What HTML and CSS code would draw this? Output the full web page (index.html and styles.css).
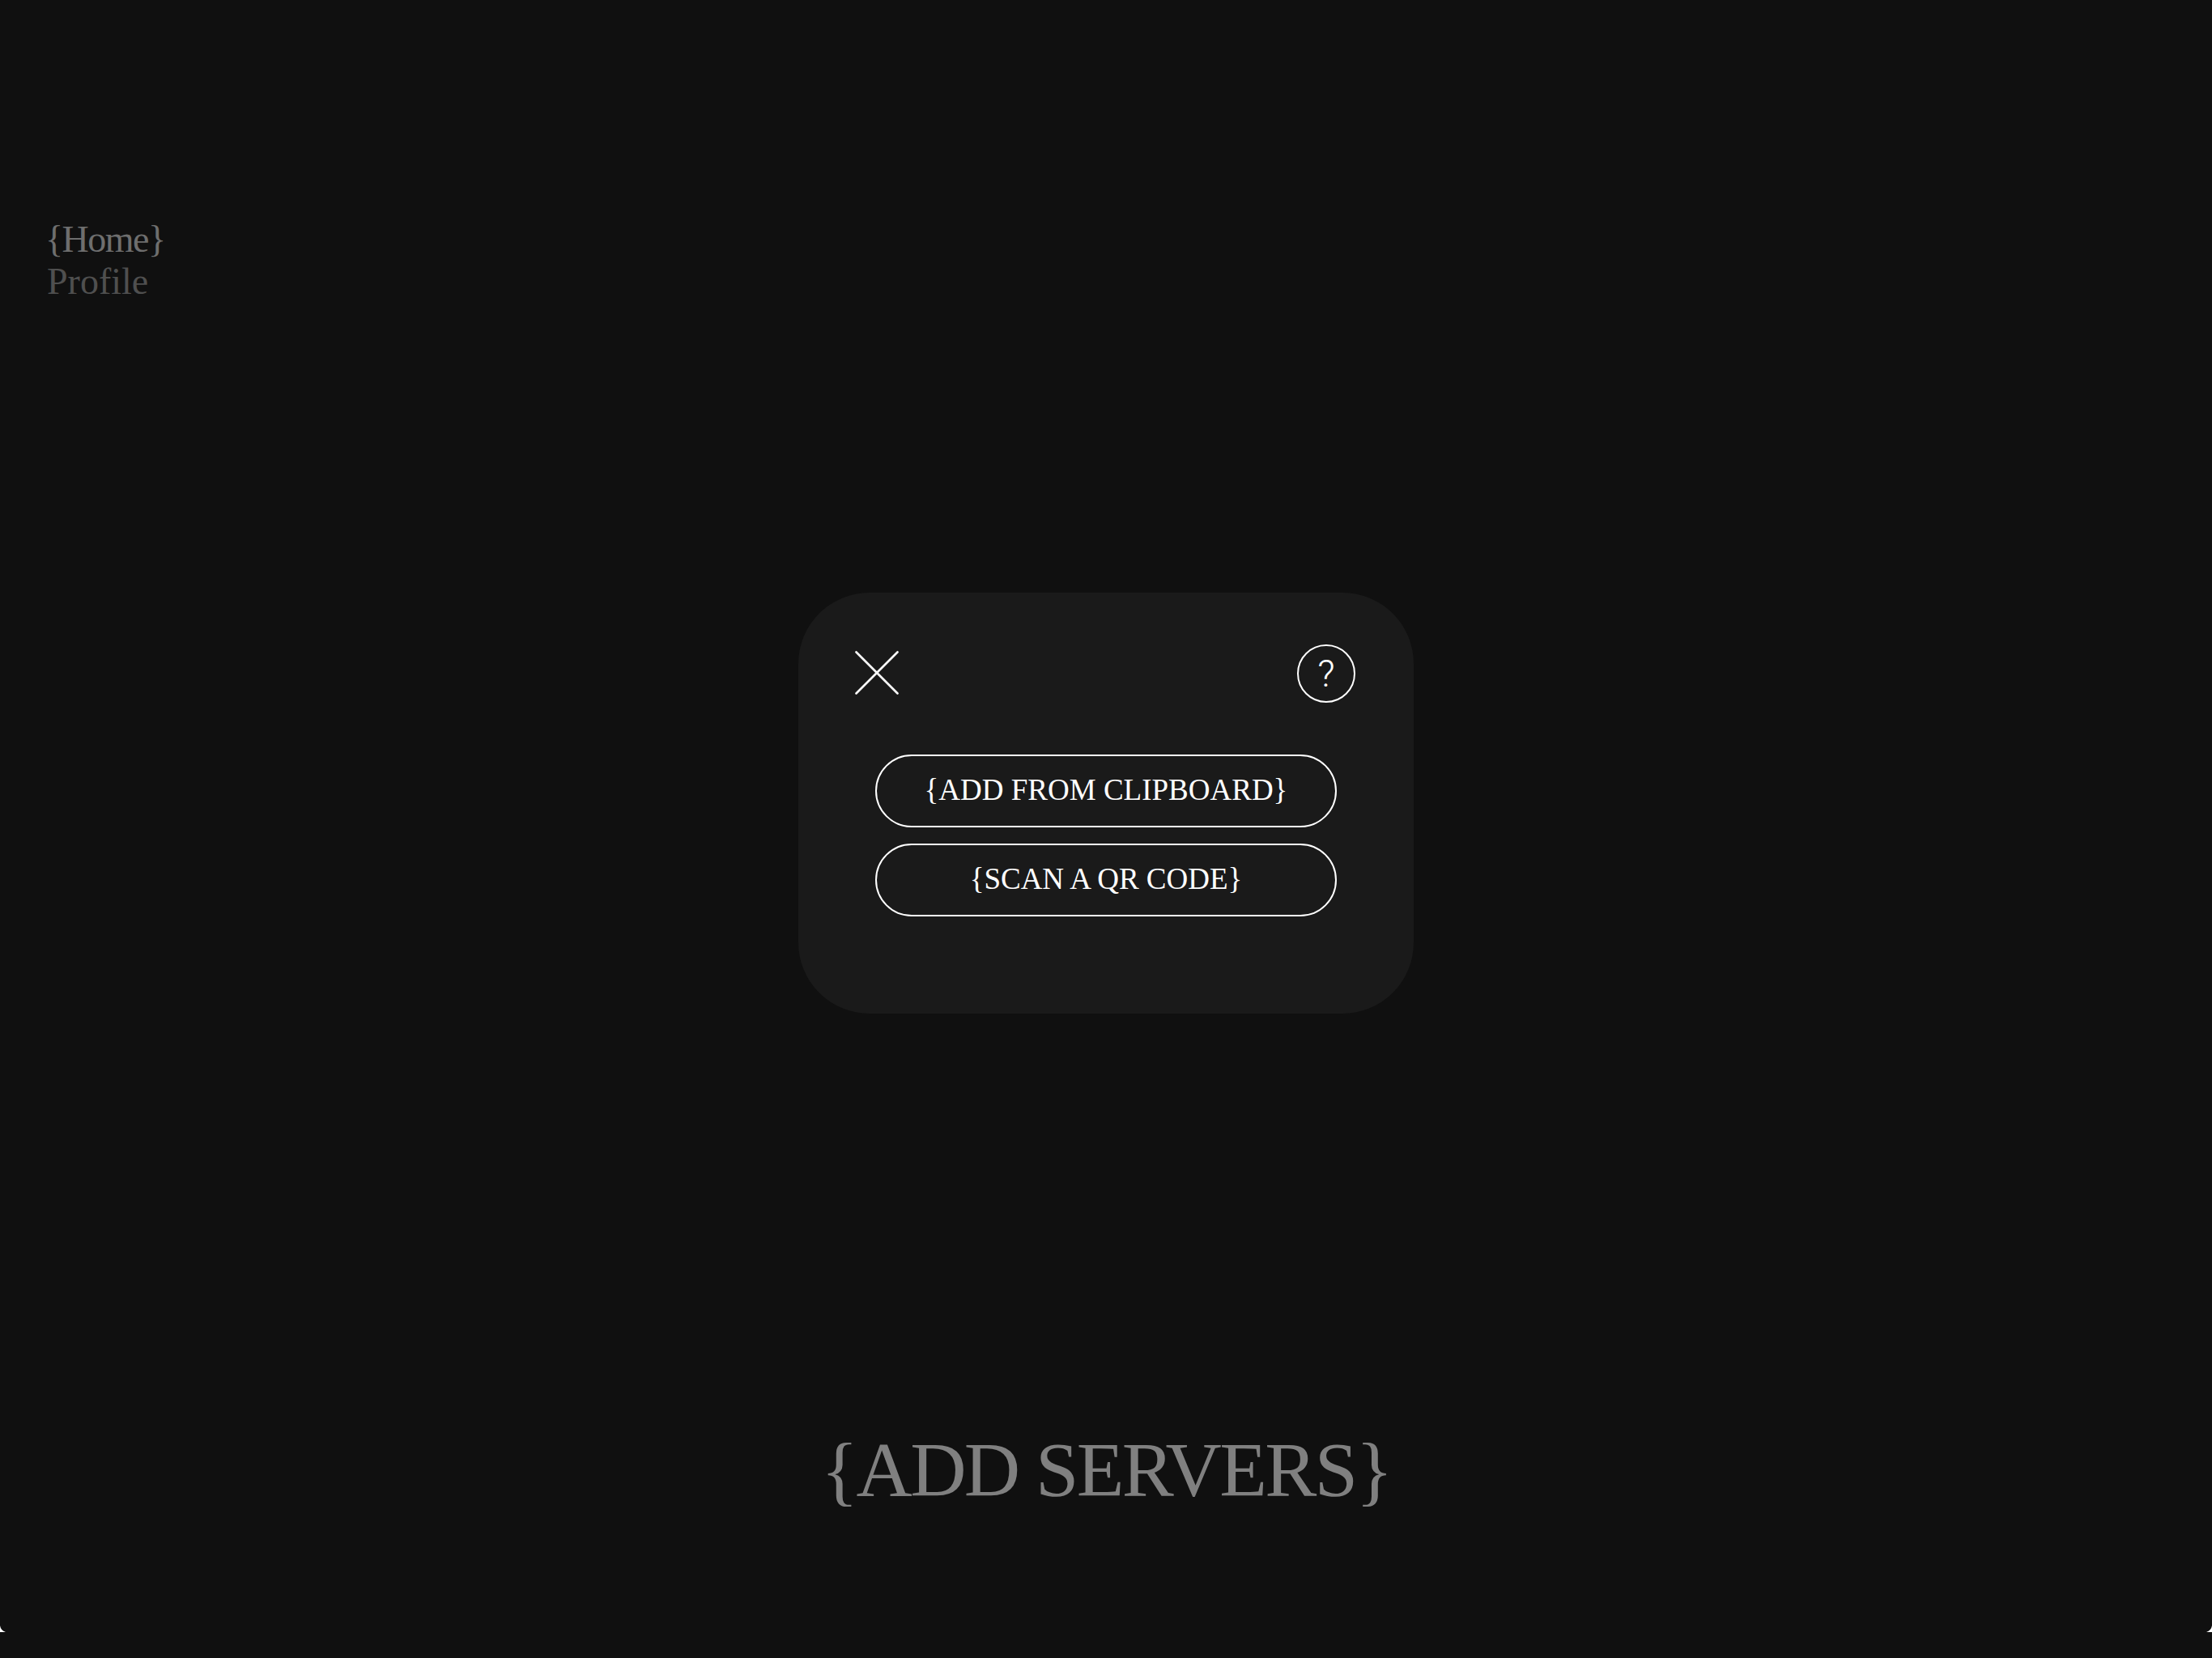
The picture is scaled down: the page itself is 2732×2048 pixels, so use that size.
FILE: index.html
```html
<!DOCTYPE html>
<html lang="en">
<head>
  <meta charset="UTF-8">
  <meta name="viewport" content="width=device-width, initial-scale=1.0">
  <title>Add Servers</title>
  <link rel="stylesheet" href="styles.css">
</head>
<body>
  <div class="page">
    <nav class="side-nav">
      <a class="nav-link active" href="#">{Home}</a>
      <a class="nav-link" href="#">Profile</a>
    </nav>
    <h1 class="page-title">{ADD SERVERS}</h1>
  </div>

  <div class="overlay">
    <div class="modal">
      <div class="modal-head">
        <button type="button" class="icon-close" aria-label="Close">
          <svg width="54" height="54" viewBox="0 0 54 54">
            <path d="M1.5 1.5 L52.5 52.5 M52.5 1.5 L1.5 52.5" fill="none" stroke="#fff" stroke-width="2.6" stroke-linecap="round"/>
          </svg>
        </button>
        <button type="button" class="icon-help" aria-label="Help">?</button>
      </div>
      <div class="modal-actions">
        <button type="button" class="pill">{ADD FROM CLIPBOARD}</button>
        <button type="button" class="pill">{SCAN A QR CODE}</button>
      </div>
    </div>
  </div>

  <svg class="corner corner-left" width="8" height="8" viewBox="0 0 8 8"><path d="M0 0 Q1 6 7 8 L0 8 Z" fill="#fff"/></svg>
  <svg class="corner corner-right" width="8" height="8" viewBox="0 0 8 8"><path d="M8 0 Q7 6 1 8 L8 8 Z" fill="#fff"/></svg>
</body>
</html>
```

FILE: styles.css
```css
* {
  box-sizing: border-box;
}

body {
  margin: 0;
  height: 2048px;
  position: relative;
  overflow: hidden;
  background-color: #101010;
  font-family: "Liberation Serif", serif;
}

.page {
  height: 100%;
  padding: 270px 58px 0;
  display: flex;
  flex-direction: column;
}

.side-nav {
  display: flex;
  flex-direction: column;
  align-items: flex-start;
}

.nav-link {
  font-size: 46px;
  line-height: 52px;
  color: #4f4f4f;
  text-decoration: none;
}

.nav-link.active {
  margin-left: -2px;
  letter-spacing: -1.5px;
  color: #6e6e6e;
}

.page-title {
  margin: 1387px 0 0;
  font-size: 96px;
  line-height: 110px;
  font-weight: normal;
  letter-spacing: -2.6px;
  text-align: center;
  color: #808080;
}

.overlay {
  position: absolute;
  top: 0;
  left: 0;
  right: 0;
  bottom: 64px;
  display: flex;
  align-items: center;
  justify-content: center;
}

.modal {
  width: 760px;
  height: 520px;
  padding: 64px 72px 0 70px;
  background-color: #1a1a1a;
  border-radius: 88px;
}

.modal-head {
  display: flex;
  justify-content: space-between;
  align-items: center;
  height: 71px;
}

.icon-close {
  padding: 0;
  border: none;
  background: none;
  height: 54px;
  margin-bottom: 2px;
}

.icon-help {
  width: 72px;
  height: 72px;
  padding: 0;
  border: 2px solid #fff;
  border-radius: 50%;
  background: none;
  color: #fff;
  font-family: Roboto, sans-serif;
  font-weight: 300;
  font-size: 47px;
  line-height: 1;
}

.modal-actions {
  margin: 65px 23px 0 25px;
  display: flex;
  flex-direction: column;
  gap: 20px;
}

.pill {
  height: 90px;
  padding: 0 0 3px;
  border: 2px solid #fff;
  border-radius: 45px;
  background: none;
  color: #fff;
  font-family: "Liberation Serif", serif;
  font-size: 37px;
}

.corner {
  position: absolute;
  top: 2008px;
}

.corner-left {
  left: 0;
}

.corner-right {
  right: 0;
}
```
